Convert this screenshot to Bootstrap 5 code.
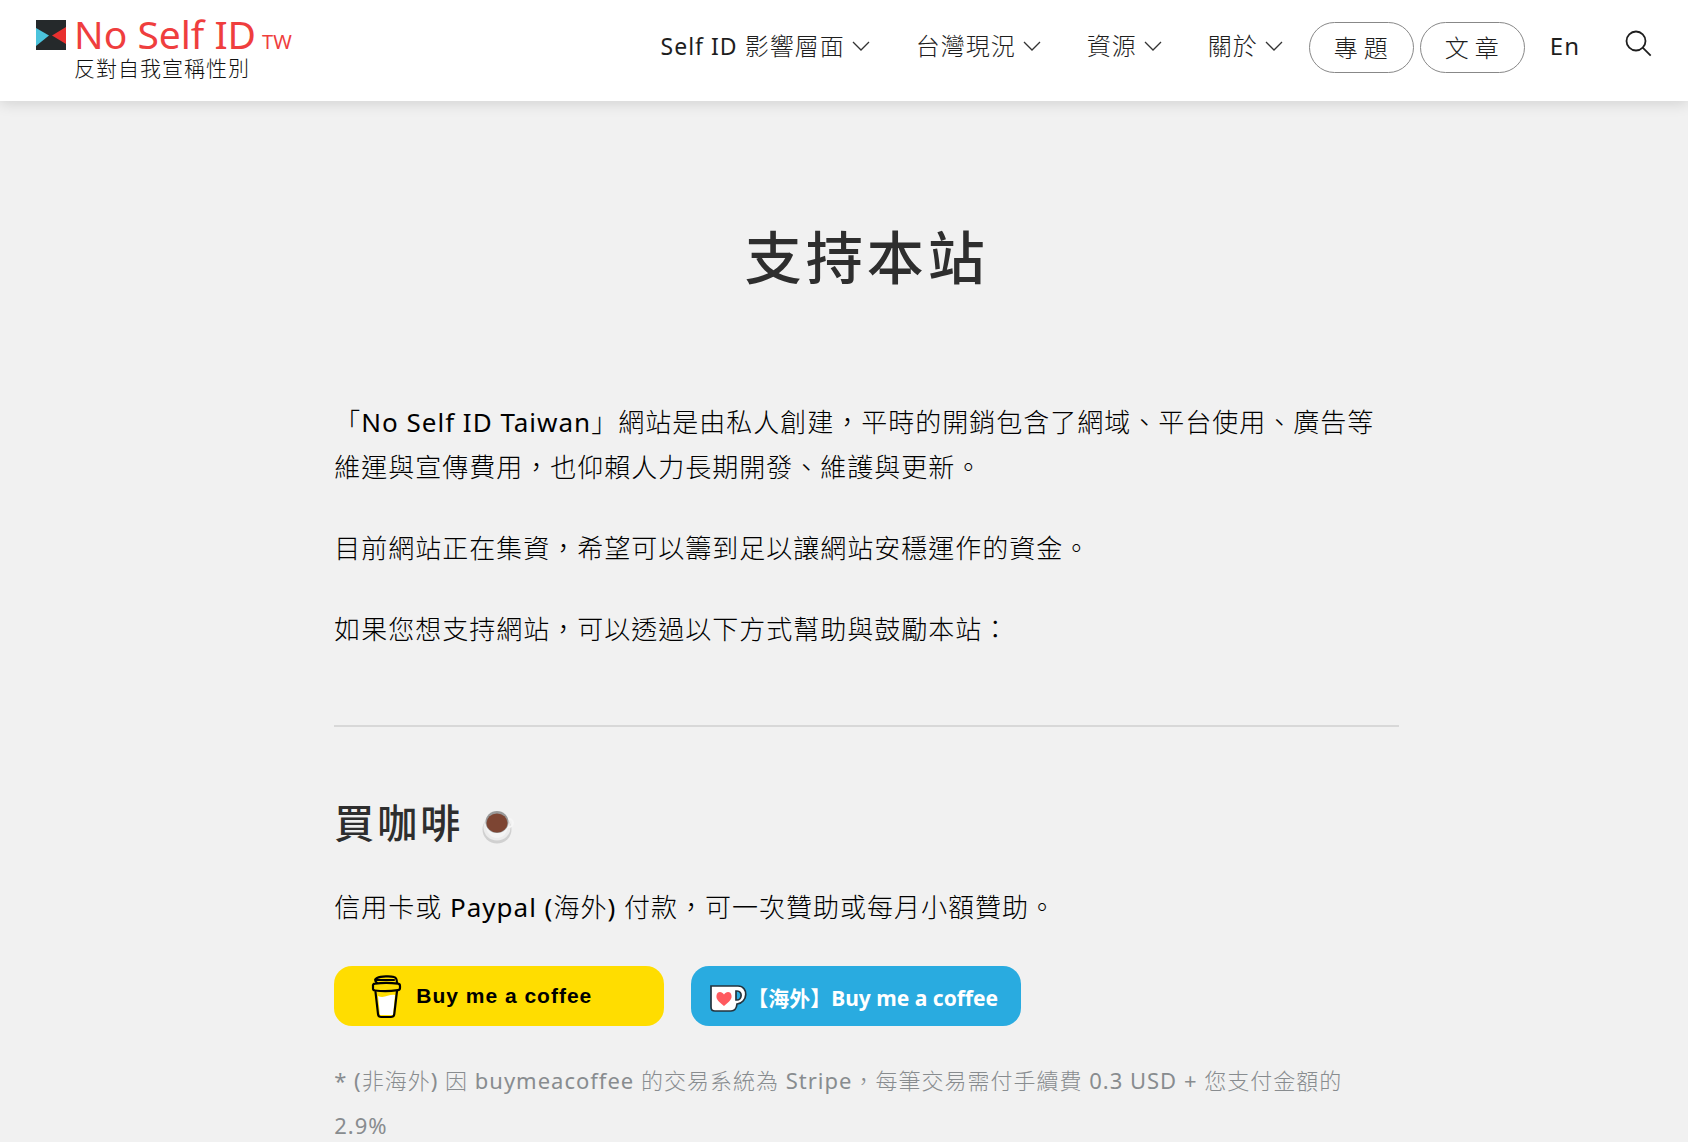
<!DOCTYPE html>
<html lang="zh-Hant">
<head>
<meta charset="utf-8">
<meta name="viewport" content="width=device-width, initial-scale=1">
<title>支持本站 - No Self ID TW</title>
<link href="https://cdn.jsdelivr.net/npm/bootstrap@5.3.0/dist/css/bootstrap.min.css" rel="stylesheet">
<style>
  body { background: #f1f1f1; color: #000; font-family: "Noto Sans", "Noto Sans CJK TC", sans-serif; }
  a { color: inherit; text-decoration: none; }
  .latin { font-weight: 400; }
  .site-header { background: #fff; min-height: 101px; padding: 0 36px; box-shadow: 0 2px 14px rgba(0,0,0,.14); position: relative; }
  .brand-name { color: #ef3e3e; font-size: 39px; line-height: 34px; gap: 6px; }
  .brand-region { font-size: 20px; }
  .brand-tag { font-size: 21px; line-height: 18px; font-weight: 300; letter-spacing: 1px; color: #111; }
  .brand-mark { margin-top: 20px; }
  .brand-text { padding-top: 17px; }
  .site-nav { font-size: 24px; line-height: 32px; color: #1e1e1e; font-weight: 300; letter-spacing: 1px; padding-top: 22px; }
  .site-nav .menu-link { margin-right: 46px; gap: 7px; }
  .site-nav .menu-last { margin-right: 26px; }
  .menu-latin { font-size: 23px; }
  .pill { border: 1px solid #888; border-radius: 26px; height: 51px; padding: 0 19px 0 24px; letter-spacing: 6px; margin-right: 6px; }
  .lang-link { margin-left: 19px; }
  .search-btn { color: #1e1e1e; margin-left: 45px; }
  .page-body { padding: 0 17.1% 0 19.8%; font-size: 26px; line-height: 45px; font-weight: 300; letter-spacing: 1px; }
  .page-body p { margin-bottom: 36px; }
  .page-title { font-size: 57px; line-height: 80px; font-weight: 500; letter-spacing: 4px; color: #2e2e2e; margin: 116px 0 103px; }
  .rule { border-top: 2px solid #d8d8d8; opacity: 1; margin: 73px 0 68px; }
  .sub-title { font-size: 40px; line-height: 56px; font-weight: 500; letter-spacing: 3px; color: #2e2e2e; margin: 0 0 34px; gap: 18px; }
  .donate-row { gap: 27px; margin-bottom: 32px; }
  .donate { width: 330px; height: 60px; border-radius: 18px; }
  .donate-yellow { background: #ffdd00; color: #000; font: bold 21px/30px "Liberation Sans", sans-serif; letter-spacing: 1px; padding-left: 37px; gap: 14px; }
  .donate-blue { background: #29abe0; color: #fff; font: bold 21px/30px "Noto Sans", "Noto Sans CJK TC", sans-serif; letter-spacing: 0; padding: 4px 0 0 19px; }
  .note { font-size: 22px; color: #888c8f; }
</style>
</head>
<body>
<header class="site-header d-flex justify-content-between align-items-start">
  <a href="#" class="d-flex align-items-start">
    <svg class="brand-mark" width="30" height="30" viewBox="0 0 30 30" aria-hidden="true">
      <rect width="30" height="30" fill="#25292b"/><path d="M0 8 13 15.500 0 26z" fill="#4bc3dc"/><path d="M30 7 16 15.500 30 24z" fill="#e8302f"/>
    </svg>
    <span class="brand-text ms-2 d-flex flex-column">
      <span class="brand-name d-flex align-items-baseline"><span>No Self ID</span><span class="brand-region">TW</span></span>
      <span class="brand-tag">反對自我宣稱性別</span>
    </span>
  </a>
  <nav class="site-nav d-flex align-items-start">
    <a href="#" class="menu-link d-flex align-items-center pt-2"><span><span class="latin menu-latin">Self ID</span> 影響層面</span><svg width="18" height="11" viewBox="0 0 18 11" fill="none" stroke="#333" stroke-width="1.300" aria-hidden="true"><path d="m1 1 8 8 8-8"/></svg></a>
    <a href="#" class="menu-link d-flex align-items-center pt-2"><span>台灣現況</span><svg width="18" height="11" viewBox="0 0 18 11" fill="none" stroke="#333" stroke-width="1.300" aria-hidden="true"><path d="m1 1 8 8 8-8"/></svg></a>
    <a href="#" class="menu-link d-flex align-items-center pt-2"><span>資源</span><svg width="18" height="11" viewBox="0 0 18 11" fill="none" stroke="#333" stroke-width="1.300" aria-hidden="true"><path d="m1 1 8 8 8-8"/></svg></a>
    <a href="#" class="menu-link menu-last d-flex align-items-center pt-2"><span>關於</span><svg width="18" height="11" viewBox="0 0 18 11" fill="none" stroke="#333" stroke-width="1.300" aria-hidden="true"><path d="m1 1 8 8 8-8"/></svg></a>
    <a href="#" class="pill d-flex align-items-center">專題</a>
    <a href="#" class="pill d-flex align-items-center">文章</a>
    <a href="#" class="lang-link latin pt-2">En</a>
    <button type="button" class="search-btn btn p-0 pt-2 border-0 lh-1" aria-label="搜尋"><svg width="27" height="27" viewBox="0 0 27 27" fill="none" stroke="currentColor" stroke-width="1.800" aria-hidden="true"><circle cx="11" cy="11" r="9.500"/><path d="m17.700 17.700 8 8"/></svg></button>
  </nav>
</header>
<main class="page-body">
  <h1 class="page-title text-center">支持本站</h1>
  <p>「<span class="latin">No Self ID Taiwan</span>」網站是由私人創建，平時的開銷包含了網域、平台使用、廣告等維運與宣傳費用，也仰賴人力長期開發、維護與更新。</p>
  <p>目前網站正在集資，希望可以籌到足以讓網站安穩運作的資金。</p>
  <p>如果您想支持網站，可以透過以下方式幫助與鼓勵本站：</p>
  <hr class="rule">
  <h2 class="sub-title d-flex align-items-center">買咖啡
    <svg class="mt-2" width="34" height="34" viewBox="0 0 34 34" role="img" aria-label="咖啡"><ellipse cx="16" cy="19.500" rx="14.500" ry="14" fill="#d0d0d0"/><ellipse cx="16" cy="17.500" rx="13.500" ry="13" fill="#ececec"/><circle cx="28" cy="13" r="4" fill="none" stroke="#f6f6f6" stroke-width="2"/><path d="M4.500 13c0 20 23 20 23 0z" fill="#f4f4f4"/><ellipse cx="16" cy="12" rx="11.500" ry="11" fill="#999"/><ellipse cx="16" cy="13" rx="10.500" ry="9.500" fill="#7d4533"/></svg>
  </h2>
  <p>信用卡或 <span class="latin">Paypal (</span>海外<span class="latin">)</span> 付款，可一次贊助或每月小額贊助。</p>
  <div class="donate-row d-flex flex-wrap">
    <a href="#" class="donate donate-yellow d-flex align-items-center">
      <svg width="31" height="45" viewBox="0 0 31 45" fill="none" stroke="#000" stroke-width="2.200" stroke-linejoin="round" stroke-linecap="round" aria-hidden="true"><path d="M7 22c6 3 11-2 17-1l-2 20H9z" fill="#fff" stroke="none"/><path d="M4.500 18 7 40q.300 3 3 3h10q3 0 3.300-3L26 17"/><path d="M2 12q-.500-2 2-2.300Q15 8 27 9.700q2 .300 2 2.300v2q0 2-2.200 2.200Q15 18 4 16.500q-2.300-.300-2-2.500z"/><path d="M6 9c-3-3-2-4 0-5 4-2 14-2 17-1 2 .5 3 3 3 6M5 6h18"/></svg>
      <span>Buy me a coffee</span></a>
    <a href="#" class="donate donate-blue d-flex align-items-center">
      <svg width="37" height="27" viewBox="0 0 37 27" aria-hidden="true"><path d="M1 1h27c11 0 10 17-1 18-.500 5-2 7-6 7H5q-4 0-4-4z" fill="#fff" stroke="#24333d" stroke-width="1.700"/><path d="M26 6h1c6 0 5 9 0 9h-1z" fill="#29abe0" stroke="#24333d" stroke-width="1.700"/><path d="M14 21C8 16 6 14 6.500 10.500 7 6 12 6 14 9.500c2-3.500 7-3.500 7.500 1C22 14 20 16 14 21z" fill="#ff5a5f"/></svg>
      <span>【海外】Buy me a coffee</span></a>
  </div>
  <p class="note"><span class="latin">* (</span>非海外<span class="latin">)</span> 因 <span class="latin">buymeacoffee</span> 的交易系統為 <span class="latin">Stripe</span>，每筆交易需付手續費 <span class="latin">0.3 USD +</span> 您支付金額的 <span class="latin">2.9%</span></p>
</main>
<script src="https://cdn.jsdelivr.net/npm/bootstrap@5.3.0/dist/js/bootstrap.bundle.min.js"></script>
</body>
</html>
